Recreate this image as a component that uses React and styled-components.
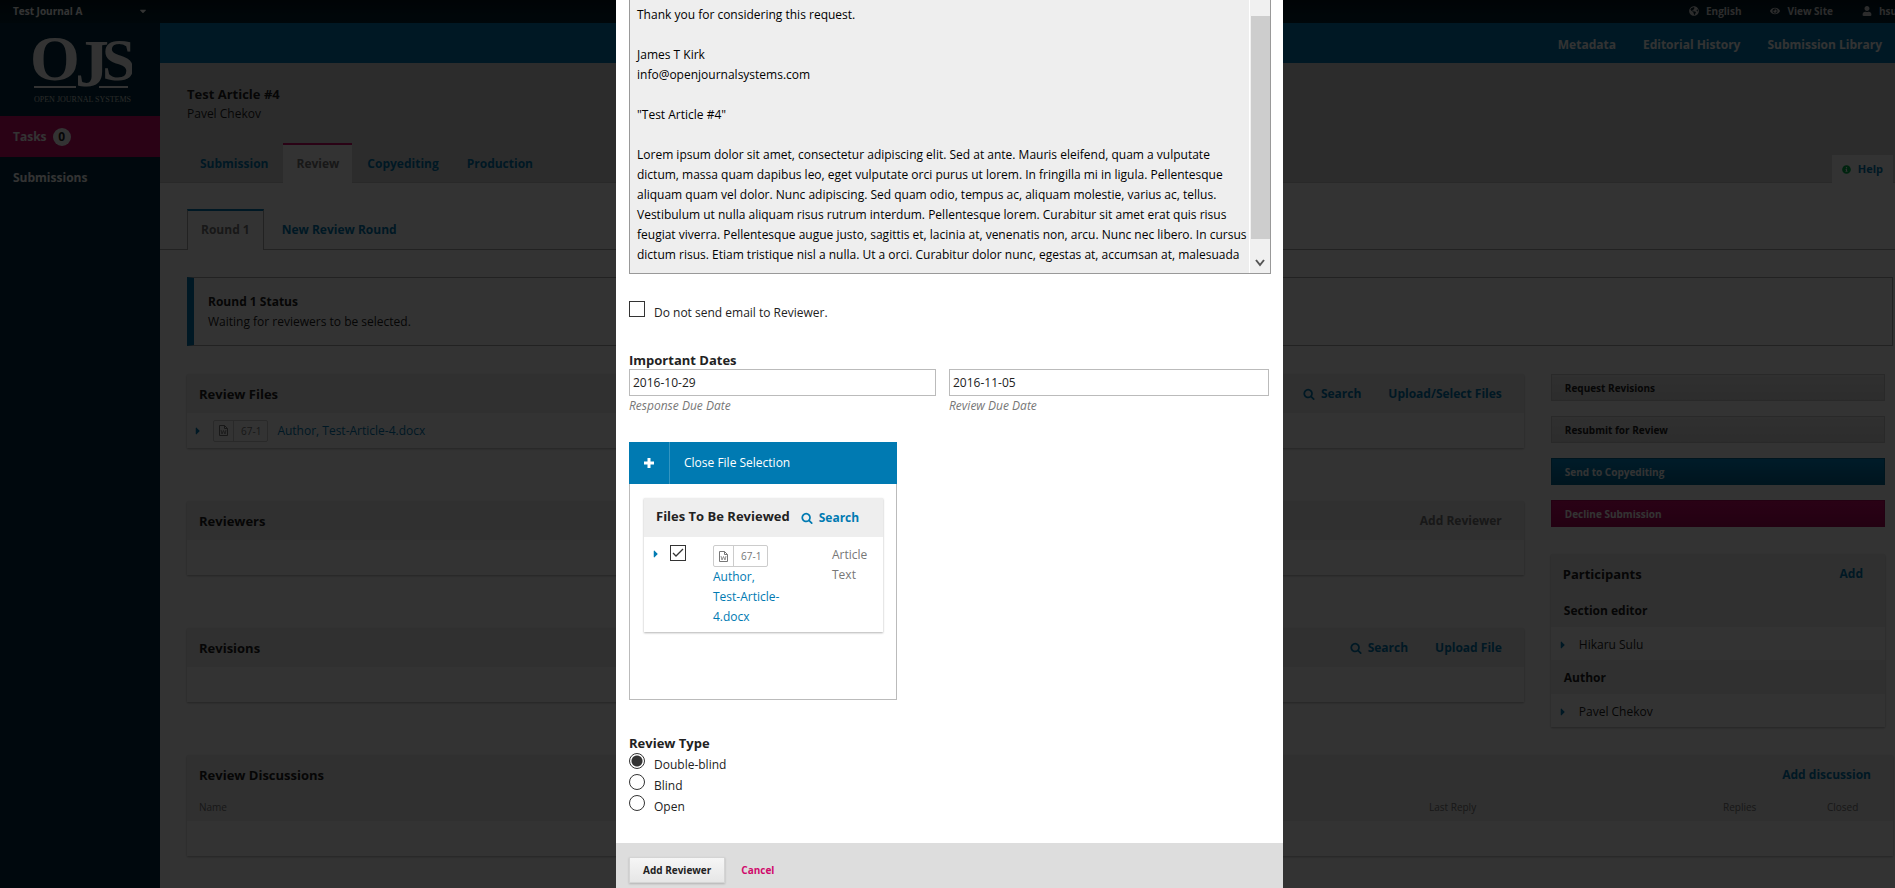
import { useState } from "react";
import styled, { createGlobalStyle } from "styled-components";
import {
  FaCaretDown,
  FaCaretRight,
  FaEye,
  FaGlobeAmericas,
  FaInfoCircle,
  FaUser,
} from "react-icons/fa";

const GlobalStyle = createGlobalStyle`
  * {
    box-sizing: border-box;
  }
  body {
    margin: 0;
    overflow: hidden;
    background: #fff;
    color: #222;
    font-family: "Open Sans", "Noto Sans", sans-serif;
    font-size: 12px;
    line-height: 20px;
  }
  button, input, textarea {
    font-family: inherit;
    font-size: inherit;
    line-height: inherit;
    color: inherit;
  }
  h1, h2, h3, p, ul, fieldset {
    margin: 0;
    padding: 0;
    border: 0;
  }
`;

const Page = styled.div`
  min-height: 100vh;
  display: flex;
  flex-direction: column;
`;
const TopBar = styled.header`
  display: flex;
  justify-content: space-between;
  height: 23px;
  padding-left: 13px;
  background: linear-gradient(#001520, #002434);
  color: #fff;
  font-size: 10px;
  font-weight: 700;
`;
const JournalButton = styled.button`
  display: flex;
  align-items: center;
  justify-content: space-between;
  width: 135px;
  padding: 0 0 2px;
  border: 0;
  background: none;
  font-weight: 700;
`;
const UserNav = styled.nav`
  display: flex;
  gap: 29px;
  width: 206px;
  white-space: nowrap;
`;
const UserLink = styled.a`
  display: flex;
  flex: none;
  align-items: center;
  gap: 7px;
  padding-bottom: 2px;
  color: #ddd;
  text-decoration: none;
`;
const Columns = styled.div`
  display: flex;
  flex: 1;
`;
const Sidebar = styled.aside`
  flex: none;
  width: 160px;
  background: #002c40;
  font-weight: 700;
`;
const Logo = styled.a`
  display: block;
  height: 93px;
  padding: 10px 0 0 28px;
`;
const SideLink = styled.a`
  display: flex;
  align-items: center;
  gap: 6px;
  height: 41px;
  padding-left: 13px;
  background: ${(props) => (props.$active ? "#d00a6c" : "transparent")};
  color: #fff;
  text-decoration: none;
`;
const Badge = styled.span`
  width: 18px;
  height: 18px;
  border-radius: 50%;
  background: #fff;
  color: #222;
  line-height: 18px;
  text-align: center;
`;
const Main = styled.main`
  flex: 1;
  min-width: 0;
`;
const ActionBar = styled.nav`
  display: flex;
  align-items: center;
  justify-content: flex-end;
  gap: 27px;
  height: 40px;
  padding: 0 13px 0 27px;
  background: #007ab2;
`;
const ActionLink = styled.a`
  color: #fff;
  font-weight: 700;
  padding-top: 4px;
  text-decoration: none;
`;
const ArticleHeader = styled.div`
  display: flex;
  flex-direction: column;
  justify-content: space-between;
  height: 120px;
  padding: 21px 2px 0 27px;
  background: #ddd;
  border-bottom: 1px solid #ccc;
`;
const ArticleTitle = styled.h1`
  font-size: 13px;
  line-height: 20px;
`;
const TabRow = styled.div`
  display: flex;
  align-items: flex-end;
  margin-bottom: -1px;
`;
const Tab = styled.a`
  height: 40px;
  padding: 9px 13px 0;
  border-top: 2px solid ${(props) => (props.$active ? "#d00a6c" : "transparent")};
  background: ${(props) => (props.$active ? "#fff" : "transparent")};
  color: ${(props) => (props.$active ? "#777" : "#007ab2")};
  font-weight: 700;
  text-decoration: none;
  margin-right: 2px;
`;
const HelpTab = styled.a`
  display: flex;
  align-items: center;
  gap: 7px;
  height: 28px;
  margin-left: auto;
  padding: 0 10px;
  background: #fff;
  color: #007ab2;
  font-size: 11px;
  font-weight: 700;
  text-decoration: none;
  svg {
    color: #00b24e;
  }
`;
const RoundRow = styled.div`
  display: flex;
  height: 67px;
  padding: 26px 2px 0 27px;
  border-bottom: 1px solid #aaa;
`;
const RoundTab = styled.a`
  height: 41px;
  padding: 9px 13px 0;
  margin-right: 4px;
  border: solid transparent;
  border-width: 2px 1px 0;
  border-color: ${(props) =>
    props.$active ? "#007ab2 #aaa transparent" : "transparent"};
  background: ${(props) => (props.$active ? "#fff" : "none")};
  color: ${(props) => (props.$active ? "#777" : "#007ab2")};
  font-weight: 700;
  text-decoration: none;
`;
const Workspace = styled.div`
  padding: 27px 2px 30px 27px;
`;
const Status = styled.section`
  height: 69px;
  padding: 14px 14px 0;
  border: 1px solid #aaa;
  border-left: 7px solid #007ab2;
`;
const StatusTitle = styled.h2`
  font-size: 12px;
  line-height: 20px;
`;
const Board = styled.div`
  display: grid;
  grid-template-columns: 4fr 1fr;
  align-items: start;
  gap: 27px;
  padding: 28px 8px 0 0;
`;
const Stack = styled.div`
  display: grid;
  gap: 53px;
  padding-bottom: 53px;
`;
const Grid = styled.section`
  background: #fff;
  box-shadow: 0 1px 2px rgba(0, 0, 0, 0.3);
`;
const GridHead = styled.div`
  display: flex;
  align-items: center;
  gap: 27px;
  height: 39px;
  padding: 0 22px 0 12px;
  background: #eee;
`;
const GridTitle = styled.h3`
  margin-right: auto;
  font-size: 13px;
`;
const GridAction = styled.a`
  display: flex;
  align-items: center;
  gap: 6px;
  color: ${(props) => (props.$muted ? "#777" : "#007ab2")};
  font-weight: 700;
  text-decoration: none;
`;
const GridBody = styled.div`
  display: flex;
  align-items: center;
  height: 35px;
  padding-left: 8px;
`;
const Caret = styled.button`
  display: flex;
  width: 6px;
  padding: 0;
  border: 0;
  background: none;
  color: #007ab2;
  font-size: 12px;
`;
const FileTag = styled.span`
  display: inline-flex;
  align-items: center;
  height: 22px;
  border: 1px solid #ccc;
  border-radius: 2px;
  color: #777;
  font-size: 10px;
  svg {
    margin: 0 5px;
  }
  span {
    padding: 0 6px 0 7px;
    border-left: 1px solid #ccc;
  }
`;
const FileLink = styled.a`
  color: #007ab2;
  text-decoration: none;
`;
const FileRow = styled.div`
  display: flex;
  align-items: center;
  gap: 9px;
  ${FileTag} {
    margin-left: 3px;
  }
`;
const Table = styled.table`
  width: 100%;
  border-collapse: collapse;
  table-layout: fixed;
  th {
    height: 27px;
    padding: 0 0 2px 12px;
    background: #eee;
    color: #777;
    font-size: 10px;
    font-weight: 400;
    text-align: left;
  }
  td {
    height: 35px;
  }
`;
const Decisions = styled.div`
  display: grid;
  gap: 15px;
  padding: 0 0 27px;
`;
const tones = {
  plain: ["#eee", "#ddd", "#222", "#ccc"],
  primary: ["#008acb", "#006897", "#fff", "#006897"],
  danger: ["#d00a6c", "#b0085b", "#fff", "#b0085b"],
};
const DecisionButton = styled.button`
  height: 27px;
  padding: 0 13px;
  border: 1px solid ${(props) => tones[props.$tone][3]};
  background: linear-gradient(
    ${(props) => tones[props.$tone][0]},
    ${(props) => tones[props.$tone][1]}
  );
  color: ${(props) => tones[props.$tone][2]};
  font-size: 10px;
  font-weight: 700;
  text-align: left;
`;
const Role = styled.h3`
  height: 34px;
  padding-left: 13px;
  background: #eee;
  font-size: 12px;
  line-height: 36px;
`;
const Person = styled.div`
  display: flex;
  align-items: center;
  gap: 13px;
  height: 33px;
  padding: 2px 0 0 9px;
`;

const Overlay = styled.div`
  position: fixed;
  inset: 0;
  display: flex;
  justify-content: center;
  padding-left: 4px;
  background: rgba(0, 0, 0, 0.8);
`;
const Modal = styled.form`
  display: flex;
  flex-direction: column;
  width: 667px;
  min-height: 100%;
  background: #fff;
`;
const ModalBody = styled.div`
  flex: 1;
  padding: 0 13px;
`;
const MessageBox = styled.div`
  display: flex;
  height: 274px;
  margin-right: -1px;
  border: 1px solid #999;
  border-top: 0;
  background: #eee;
`;
const Message = styled.textarea`
  flex: 1;
  min-width: 0;
  padding: 5px 0 5px 7px;
  border: 0;
  background: none;
  color: #000;
  overflow: hidden;
  resize: none;
  white-space: pre;
`;
const ScrollTrack = styled.div`
  display: flex;
  flex-direction: column;
  align-items: center;
  justify-content: space-between;
  width: 21px;
  padding: 16px 0 6px;
  background: #f0f0f0;
  border-left: 1px solid #fff;
`;
const ScrollThumb = styled.div`
  width: 19px;
  height: 223px;
  background: #cdcdcd;
`;
const Choice = styled.label`
  display: flex;
  gap: 9px;
  height: 21px;
`;
const ChoiceText = styled.span`
  padding-top: 3px;
`;
const SkipEmail = styled.div`
  padding: 26px 0 30px;
`;
const Check = styled.input`
  appearance: none;
  flex: none;
  width: 16px;
  height: 16px;
  margin: 1px 0 0;
  border: 1px solid #333;
  border-radius: ${(props) => (props.type === "radio" ? "50%" : "0")};
  background: #fff center / 14px 14px no-repeat;
  &[type="radio"]:checked {
    background-image: radial-gradient(circle, #333 5px, transparent 6px);
  }
`;
const CheckWrap = styled.span`
  position: relative;
  display: block;
  width: 16px;
  height: 16px;
  svg {
    position: absolute;
    inset: 0;
    pointer-events: none;
  }
  ${Check} {
    margin: 0;
    display: block;
  }
`;
const Legend = styled.h2`
  font-size: 13px;
  line-height: 18px;
`;
const Dates = styled.div`
  display: grid;
  grid-template-columns: 307fr 320fr;
  gap: 13px;
  padding-right: 1px;
`;
const DateField = styled.div`
  display: flex;
  flex-direction: column;
`;
const DateInput = styled.input`
  height: 27px;
  padding: 0 3px;
  border: 1px solid #bbb;
  background: #fff;
`;
const DateHint = styled.label`
  color: #777;
  font-size: 12px;
  font-style: italic;
`;
const FilePicker = styled.section`
  width: 268px;
  margin-top: 26px;
`;
const PickerToggle = styled.button`
  display: flex;
  align-items: center;
  width: 100%;
  height: 42px;
  padding: 0;
  border: 0;
  background: #007ab2;
  color: #fff;
  text-align: left;
`;
const PickerIcon = styled.span`
  display: flex;
  align-items: center;
  justify-content: center;
  width: 41px;
  height: 100%;
  margin-right: 14px;
  border-right: 1px solid #3395c1;
`;
const PickerBody = styled.div`
  height: 216px;
  padding: 14px 13px 14px 14px;
  border: 1px solid #bbb;
  border-top: 0;
`;
const PickerGrid = styled.div`
  box-shadow: 0 1px 2px rgba(0, 0, 0, 0.3);
`;
const PickerHead = styled.div`
  display: flex;
  gap: 11px;
  height: 39px;
  padding: 8px 12px 0;
  background: #eee;
  white-space: nowrap;
  ${GridTitle} {
    margin: 0;
  }
  ${GridAction} {
    height: 24px;
  }
`;
const PickerTable = styled.table`
  width: 100%;
  border-collapse: collapse;
  table-layout: fixed;
  td {
    padding: 8px 0 5px;
    vertical-align: top;
    color: #777;
  }
  td:first-child {
    padding: 11px 0 0 9px;
  }
  ${FileTag} {
    vertical-align: top;
  }
  ${FileLink} {
    display: block;
  }
`;
const ReviewType = styled.fieldset`
  padding: 34px 0 0;
`;
const ModalFooter = styled.footer`
  display: flex;
  align-items: flex-start;
  gap: 16px;
  height: 45px;
  padding: 14px 13px 0;
  background: #ddd;
  font-size: 10px;
`;
const SubmitButton = styled.button`
  height: 26px;
  padding: 0 13px;
  border: 1px solid #d4d4d4;
  background: linear-gradient(#f6f6f6, #e6e6e6);
  box-shadow: 0 1px 2px rgba(0, 0, 0, 0.2);
  font-weight: 700;
`;
const CancelLink = styled.a`
  color: #d00a6c;
  font-weight: 700;
  line-height: 26px;
  text-decoration: none;
`;

const message = `Thank you for considering this request.

James T Kirk
info@openjournalsystems.com

"Test Article #4"

Lorem ipsum dolor sit amet, consectetur adipiscing elit. Sed at ante. Mauris eleifend, quam a vulputate
dictum, massa quam dapibus leo, eget vulputate orci purus ut lorem. In fringilla mi in ligula. Pellentesque
aliquam quam vel dolor. Nunc adipiscing. Sed quam odio, tempus ac, aliquam molestie, varius ac, tellus.
Vestibulum ut nulla aliquam risus rutrum interdum. Pellentesque lorem. Curabitur sit amet erat quis risus
feugiat viverra. Pellentesque augue justo, sagittis et, lacinia at, venenatis non, arcu. Nunc nec libero. In cursus
dictum risus. Etiam tristique nisl a nulla. Ut a orci. Curabitur dolor nunc, egestas at, accumsan at, malesuada`;

const decisions = [
  { label: "Request Revisions", tone: "plain" },
  { label: "Resubmit for Review", tone: "plain" },
  { label: "Send to Copyediting", tone: "primary" },
  { label: "Decline Submission", tone: "danger" },
];

const participants = [
  { role: "Section editor", name: "Hikaru Sulu" },
  { role: "Author", name: "Pavel Chekov" },
];

const SearchIcon = () => (
  <svg width="12" height="12" viewBox="0 0 1664 1792" fill="currentColor">
    <path d="M1152 832q0-185-131.5-316.5t-316.5-131.5-316.5 131.5-131.5 316.5 131.5 316.5 316.5 131.5 316.5-131.5 131.5-316.5zm512 832q0 52-38 90t-90 38q-54 0-90-38l-343-342q-179 124-399 124-143 0-273.5-55.5t-225-150-150-225-55.5-273.5 55.5-273.5 150-225 225-150 273.5-55.5 273.5 55.5 225 150 150 225 55.5 273.5q0 220-124 399l343 343q37 37 37 90z" />
  </svg>
);

const WordIcon = () => (
  <svg width="9" height="11" viewBox="0 0 9 11" fill="none" stroke="currentColor">
    <path d="M.5.5h5l3 3v7h-8zM5.500.5v3h3" />
    <path d="M2 5l1 4 1.500-3.500L6 9l1-4" strokeWidth=".8" />
  </svg>
);

const PlusIcon = () => (
  <svg width="10" height="10" viewBox="0 0 10 10" fill="currentColor">
    <path d="M3.500 0h3v3.500H10v3H6.500V10h-3V6.500H0v-3h3.500z" />
  </svg>
);

const OjsLogo = () => (
  <svg width="104" height="72" viewBox="0 0 104 72" fill="#fff">
    <g fontFamily="Liberation Serif, serif">
      <text x="2" y="47" fontSize="64">O</text>
      <text x="47" y="53" fontSize="68">J</text>
      <text x="74" y="47" fontSize="60">S</text>
      <text x="6" y="69" fontSize="8" fontWeight="400" fill="#ccc">
        OPEN JOURNAL SYSTEMS
      </text>
    </g>
    <rect x="6" y="53" width="42" height="2" />
    <rect x="71" y="53" width="29" height="2" />
  </svg>
);

const FileBadge = () => (
  <FileTag>
    <WordIcon />
    <span>67-1</span>
  </FileTag>
);

const Search = () => (
  <GridAction href="#search">
    <SearchIcon />
    Search
  </GridAction>
);

export default function App() {
  const [reviewType, setReviewType] = useState("Double-blind");

  return (
    <>
      <GlobalStyle />
      <Page>
        <TopBar>
          <JournalButton>
            Test Journal A <FaCaretDown />
          </JournalButton>
          <UserNav>
            <UserLink href="#language">
              <FaGlobeAmericas /> English
            </UserLink>
            <UserLink href="#site">
              <FaEye /> View Site
            </UserLink>
            <UserLink href="#user">
              <FaUser /> hsu
            </UserLink>
          </UserNav>
        </TopBar>
        <Columns>
          <Sidebar>
            <Logo href="#home" aria-label="Open Journal Systems">
              <OjsLogo />
            </Logo>
            <SideLink href="#tasks" $active>
              Tasks <Badge>0</Badge>
            </SideLink>
            <SideLink href="#submissions">Submissions</SideLink>
          </Sidebar>
          <Main>
            <ActionBar>
              <ActionLink href="#metadata">Metadata</ActionLink>
              <ActionLink href="#history">Editorial History</ActionLink>
              <ActionLink href="#library">Submission Library</ActionLink>
            </ActionBar>
            <ArticleHeader>
              <div>
                <ArticleTitle>Test Article #4</ArticleTitle>
                <p>Pavel Chekov</p>
              </div>
              <TabRow>
                <Tab href="#submission">Submission</Tab>
                <Tab href="#review" $active>Review</Tab>
                <Tab href="#copyediting">Copyediting</Tab>
                <Tab href="#production">Production</Tab>
                <HelpTab href="#help">
                  <FaInfoCircle size={9} /> Help
                </HelpTab>
              </TabRow>
            </ArticleHeader>
            <RoundRow>
              <RoundTab href="#round1" $active>Round 1</RoundTab>
              <RoundTab href="#new-round">New Review Round</RoundTab>
            </RoundRow>
            <Workspace>
              <Status>
                <StatusTitle>Round 1 Status</StatusTitle>
                <p>Waiting for reviewers to be selected.</p>
              </Status>
              <Board>
                <Stack>
                  <Grid>
                    <GridHead>
                      <GridTitle>Review Files</GridTitle>
                      <Search />
                      <GridAction href="#upload">Upload/Select Files</GridAction>
                    </GridHead>
                    <GridBody>
                      <FileRow>
                        <Caret type="button" aria-label="Expand">
                          <FaCaretRight />
                        </Caret>
                        <FileBadge />
                        <FileLink href="#file">Author, Test-Article-4.docx</FileLink>
                      </FileRow>
                    </GridBody>
                  </Grid>
                  <Grid>
                    <GridHead>
                      <GridTitle>Reviewers</GridTitle>
                      <GridAction href="#add-reviewer" $muted>Add Reviewer</GridAction>
                    </GridHead>
                    <GridBody />
                  </Grid>
                  <Grid>
                    <GridHead>
                      <GridTitle>Revisions</GridTitle>
                      <Search />
                      <GridAction href="#upload-file">Upload File</GridAction>
                    </GridHead>
                    <GridBody />
                  </Grid>
                </Stack>
                <div>
                  <Decisions>
                    {decisions.map((item) => (
                      <DecisionButton key={item.label} $tone={item.tone}>
                        {item.label}
                      </DecisionButton>
                    ))}
                  </Decisions>
                  <Grid>
                    <GridHead>
                      <GridTitle>Participants</GridTitle>
                      <GridAction href="#add">Add</GridAction>
                    </GridHead>
                    {participants.map((item) => (
                      <div key={item.role}>
                        <Role>{item.role}</Role>
                        <Person>
                          <Caret type="button" aria-label="Expand">
                            <FaCaretRight />
                          </Caret>
                          {item.name}
                        </Person>
                      </div>
                    ))}
                  </Grid>
                </div>
              </Board>
              <Grid>
                <GridHead>
                  <GridTitle>Review Discussions</GridTitle>
                  <GridAction href="#add-discussion">Add discussion</GridAction>
                </GridHead>
                <Table>
                  <colgroup>
                    <col />
                    <col width="294" />
                    <col width="104" />
                    <col width="78" />
                  </colgroup>
                  <thead>
                    <tr>
                      <th>Name</th>
                      <th>Last Reply</th>
                      <th>Replies</th>
                      <th>Closed</th>
                    </tr>
                  </thead>
                  <tbody>
                    <tr>
                      <td colSpan="4" />
                    </tr>
                  </tbody>
                </Table>
              </Grid>
            </Workspace>
          </Main>
        </Columns>
      </Page>

      <Overlay>
        <Modal role="dialog" aria-label="Add Reviewer">
          <ModalBody>
            <MessageBox>
              <Message aria-label="Message" defaultValue={message} />
              <ScrollTrack>
                <ScrollThumb />
                <svg width="10" height="9" viewBox="0 0 10 9" fill="none" stroke="#555" strokeWidth="2">
                  <path d="M1 2l4 5 4-5" />
                </svg>
              </ScrollTrack>
            </MessageBox>
            <SkipEmail>
              <Choice>
                <Check type="checkbox" />
                <ChoiceText>Do not send email to Reviewer.</ChoiceText>
              </Choice>
            </SkipEmail>
            <Legend>Important Dates</Legend>
            <Dates>
              <DateField>
                <DateInput id="response" defaultValue="2016-10-29" />
                <DateHint htmlFor="response">Response Due Date</DateHint>
              </DateField>
              <DateField>
                <DateInput id="review" defaultValue="2016-11-05" />
                <DateHint htmlFor="review">Review Due Date</DateHint>
              </DateField>
            </Dates>
            <FilePicker>
              <PickerToggle type="button">
                <PickerIcon>
                  <PlusIcon />
                </PickerIcon>
                Close File Selection
              </PickerToggle>
              <PickerBody>
                <PickerGrid>
                  <PickerHead>
                    <GridTitle>Files To Be Reviewed</GridTitle>
                    <Search />
                  </PickerHead>
                  <PickerTable>
                    <colgroup>
                      <col width="26" />
                      <col width="43" />
                      <col />
                      <col width="51" />
                    </colgroup>
                    <tbody>
                      <tr>
                        <td>
                          <Caret type="button" aria-label="Expand">
                            <FaCaretRight />
                          </Caret>
                        </td>
                        <td>
                          <CheckWrap>
                            <Check type="checkbox" defaultChecked aria-label="Select file" />
                            <svg width="16" height="16" viewBox="0 0 16 16" fill="none" stroke="#333" strokeWidth="1.3">
                              <path d="M3 8l3 3 7-7" />
                            </svg>
                          </CheckWrap>
                        </td>
                        <td>
                          <FileBadge />
                          <FileLink href="#file">
                            Author,
                            <br />
                            Test-Article-
                            <br />
                            4.docx
                          </FileLink>
                        </td>
                        <td>
                          Article
                          <br />
                          Text
                        </td>
                      </tr>
                    </tbody>
                  </PickerTable>
                </PickerGrid>
              </PickerBody>
            </FilePicker>
            <ReviewType>
              <Legend>Review Type</Legend>
              {["Double-blind", "Blind", "Open"].map((type) => (
                <Choice key={type}>
                  <Check
                    type="radio"
                    name="reviewType"
                    checked={reviewType === type}
                    onChange={() => setReviewType(type)}
                  />
                  <ChoiceText>{type}</ChoiceText>
                </Choice>
              ))}
            </ReviewType>
          </ModalBody>
          <ModalFooter>
            <SubmitButton type="button">Add Reviewer</SubmitButton>
            <CancelLink href="#cancel">Cancel</CancelLink>
          </ModalFooter>
        </Modal>
      </Overlay>
    </>
  );
}
